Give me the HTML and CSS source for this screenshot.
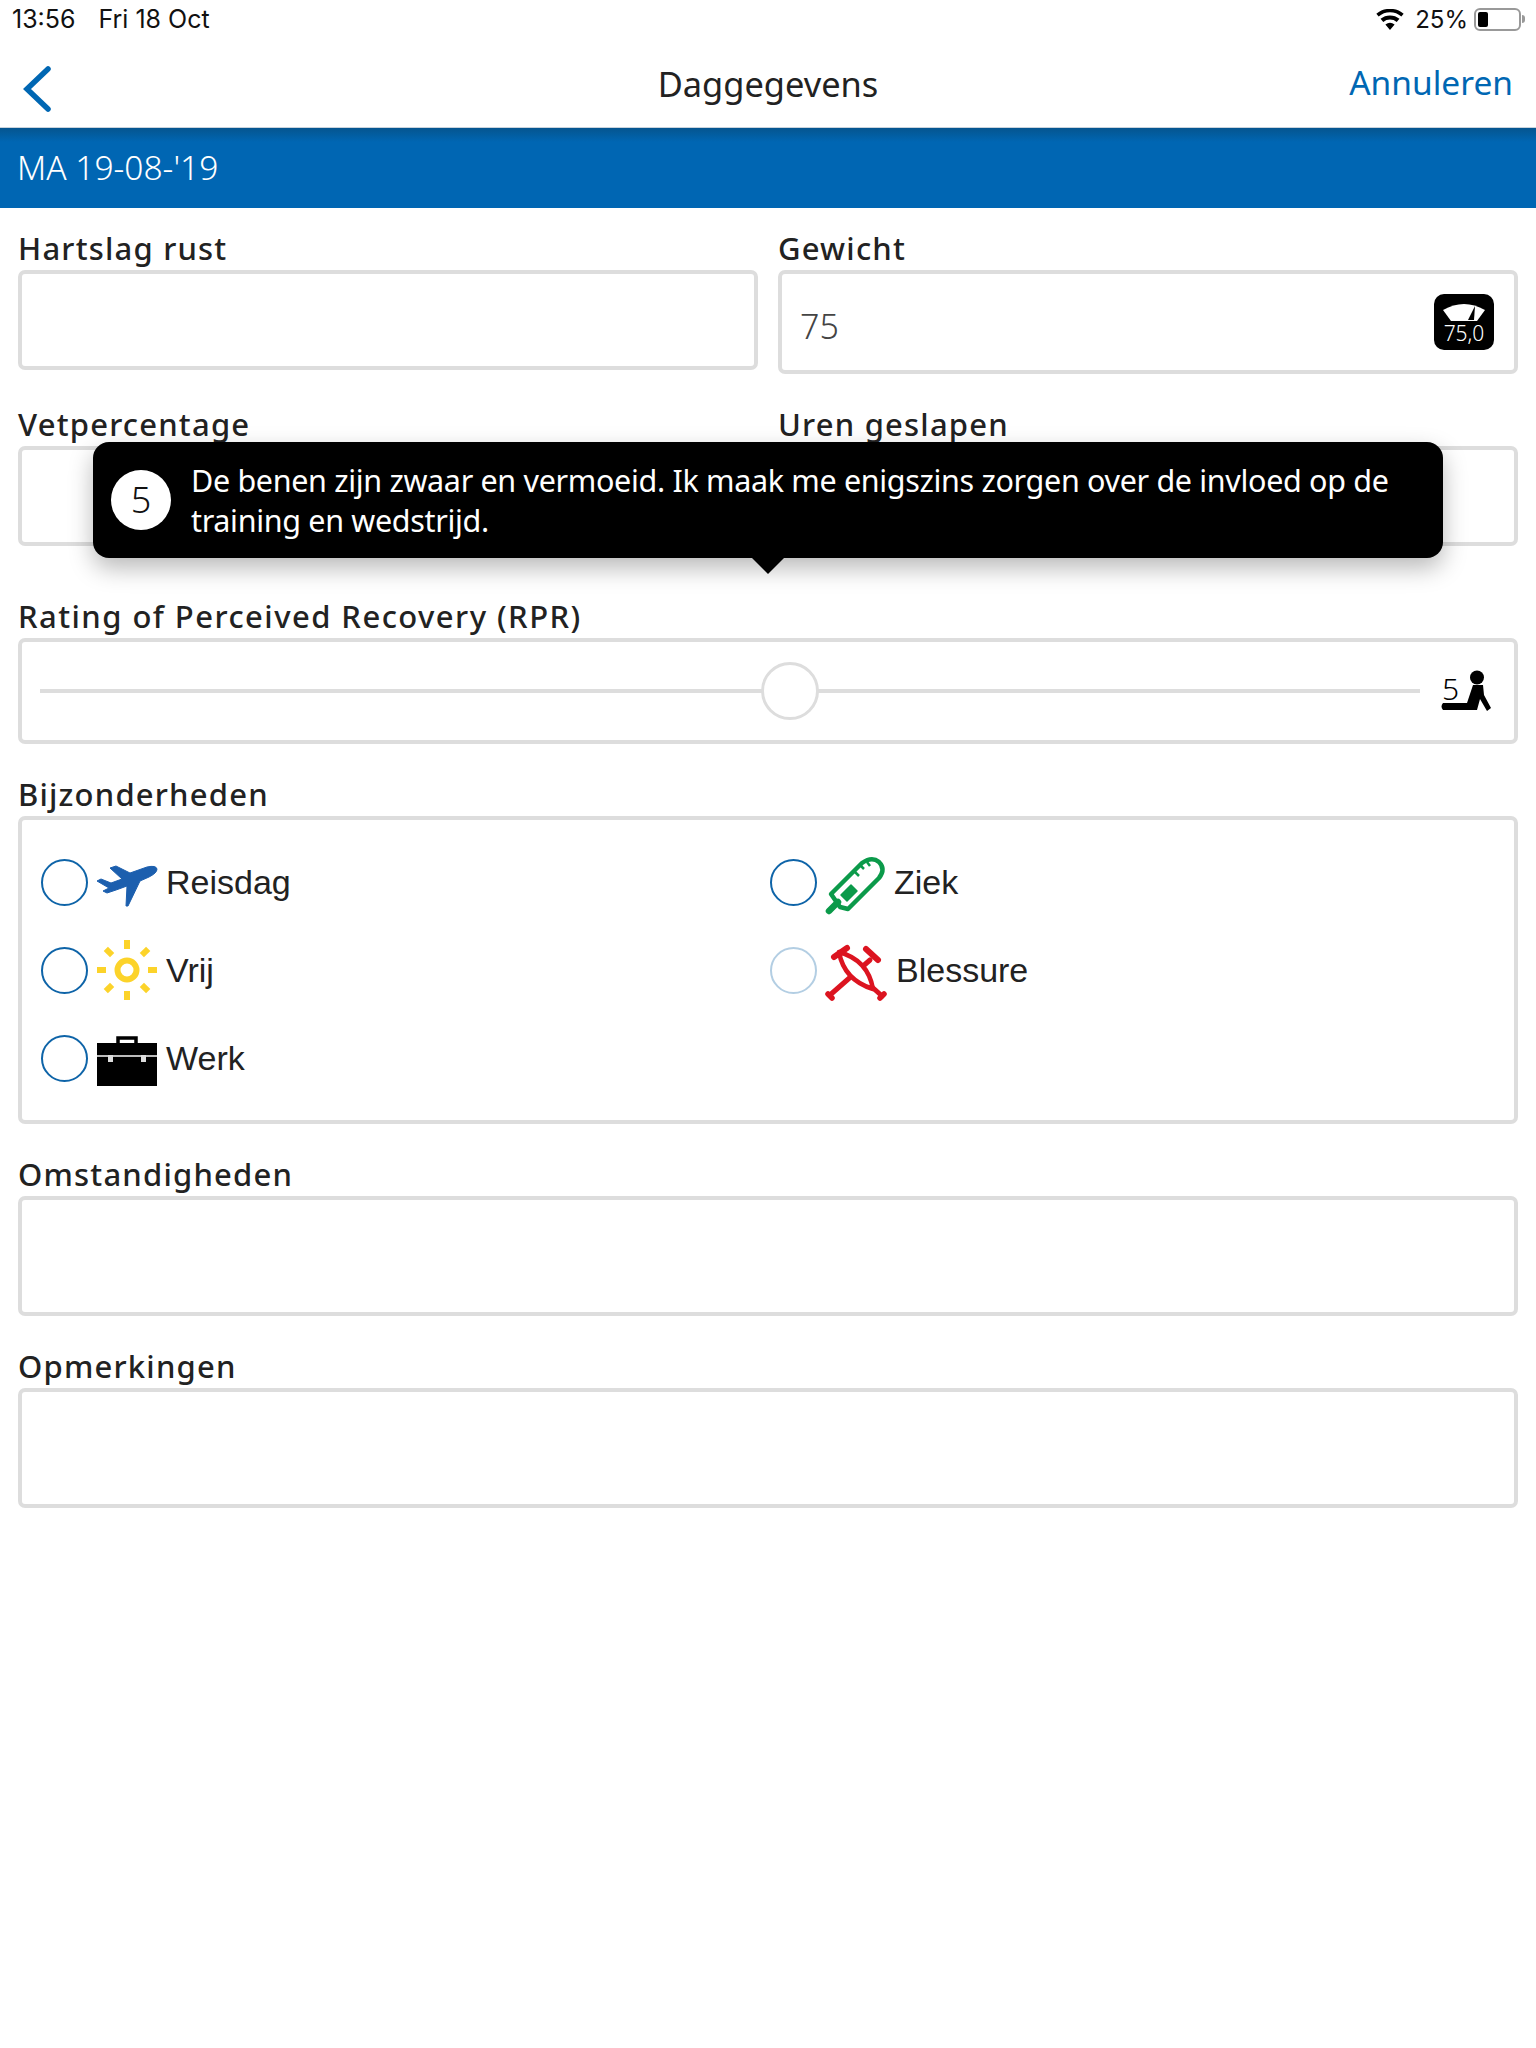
FILE: index.html
```html
<!DOCTYPE html>
<html lang="nl">
<head>
<meta charset="utf-8">
<title>Daggegevens</title>
<link rel="stylesheet" href="styles.css">
</head>
<body>
<div class="page">
  <header class="status">
    <div class="status-left"><span>13:56</span><span>Fri 18 Oct</span></div>
    <div class="status-right">
      <svg class="wifi" viewBox="0 0 26 20"><path d="M13 20 L8.6 14.8 A7 7 0 0 1 17.4 14.8 Z M6.6 12.4 L4 9.4 A14 14 0 0 1 22 9.4 L19.4 12.4 A10 10 0 0 0 6.6 12.4 Z M2.2 7.2 L0 4.6 A20 20 0 0 1 26 4.6 L23.8 7.2 A16.5 16.5 0 0 0 2.2 7.2 Z"/></svg>
      <span class="pct">25%</span>
      <div class="battery"><div class="battery-fill"></div></div>
      <div class="battery-nub"></div>
    </div>
  </header>
  <nav class="nav">
    <svg class="back" viewBox="0 0 30 48"><path d="M26 4 L5 24 L26 44" fill="none" stroke="#0067b3" stroke-width="5.5" stroke-linecap="round" stroke-linejoin="miter"/></svg>
    <div class="nav-title">Daggegevens</div>
    <div class="nav-action">Annuleren</div>
  </nav>
  <div class="band">MA 19-08-'19</div>
  <main class="form">
    <div class="grid">
      <section>
        <label class="label">Hartslag rust</label>
        <div class="box h-100"></div>
      </section>
      <section>
        <label class="label">Gewicht</label>
        <div class="box h-104 weight">
          <span class="value">75</span>
          <div class="scale">
            <svg class="scale-dial" viewBox="0 0 42 20"><path d="M0 8 Q21 -4 42 8 L34 19 L8 19 Z" fill="#fff"/><path d="M25 18 L32 4 L31 18 Z" fill="#000"/></svg>
            <span class="scale-text">75,0</span>
          </div>
        </div>
      </section>
      <section>
        <label class="label">Vetpercentage</label>
        <div class="box h-100"></div>
      </section>
      <section>
        <label class="label">Uren geslapen</label>
        <div class="box h-100"></div>
      </section>
    </div>

    <section class="sec-rpr">
      <label class="label label-wide">Rating of Perceived Recovery (RPR)</label>
      <div class="box h-106 slider">
        <div class="track"><div class="thumb"></div></div>
        <div class="rpr-icon">
          <span class="rpr-num">5</span>
          <svg class="rpr-figure" viewBox="0 0 52 44"><circle cx="37" cy="9.5" r="7"/><path d="M3 35 L27 35 L33 17 L43 17 L44 27 L51 40 L47 43 L40 31 L37 42 L3 42 Q0 38.5 3 35 Z"/></svg>
        </div>
      </div>
    </section>

    <section class="sec">
      <label class="label">Bijzonderheden</label>
      <div class="box checks">
        <div class="check">
          <span class="radio"></span>
          <svg class="ico" viewBox="0 0 60 60"><path fill="#1c5fae" stroke="#1c5fae" stroke-width="1" stroke-linejoin="round" d="M13 16 L19 14 L33 21 L50 15 Q59 13 60 17 Q60 21 52 25 L43 29 L31 54 L29 54 L30 34 L19 38 L10 41 L6 39 L12 36 L0 29 L4 27 L14 31 L25 27 Z"/></svg>
          <span class="check-text">Reisdag</span>
        </div>
        <div class="check">
          <span class="radio"></span>
          <svg class="ico" viewBox="0 0 60 60"><g transform="translate(0 5)" fill="none" stroke="#0b9a4a" stroke-linecap="round" stroke-linejoin="round"><path d="M5 37 L36 6 Q46 -1 53 5 Q60 12 53 21 L22 52 L14 50 Z" stroke-width="4.5"/><path d="M12 45 L3 54" stroke-width="6.5"/><path d="M15 38 L25 28 L31 34 L21 44 Z" fill="#0b9a4a" stroke-width="1.5"/><path d="M29 15 L33 19 M35 9 L38 12 M41 5 L44 9" stroke-width="2.5" stroke-linecap="butt"/></g></svg>
          <span class="check-text text-ziek">Ziek</span>
        </div>
        <div class="check">
          <span class="radio"></span>
          <svg class="ico" viewBox="0 0 60 60"><g fill="#fcd32a"><circle cx="30" cy="30" r="9.5" fill="none" stroke="#fcd32a" stroke-width="6"/><rect x="27" y="0" width="6" height="9"/><rect x="27" y="51" width="6" height="9"/><rect x="0" y="27" width="9" height="6"/><rect x="51" y="27" width="9" height="6"/><rect x="27" y="0" width="6" height="9" transform="rotate(45 30 30)"/><rect x="27" y="0" width="6" height="9" transform="rotate(135 30 30)"/><rect x="27" y="0" width="6" height="9" transform="rotate(225 30 30)"/><rect x="27" y="0" width="6" height="9" transform="rotate(315 30 30)"/></g></svg>
          <span class="check-text text-tight">Vrij</span>
        </div>
        <div class="check">
          <span class="radio radio-faint"></span>
          <svg class="ico" viewBox="0 0 60 60"><g transform="translate(0 6)" fill="none" stroke="#dc1420" stroke-linecap="round" stroke-linejoin="round"><path d="M44 14 L4 49" stroke-width="5"/><path d="M40 3 L52 14" stroke-width="6"/><path d="M13 6 Q42 14 47 43 Q18 34 13 6 Z" fill="#fff" stroke-width="4.5"/><path d="M46 41 L56 50" stroke-width="5"/><path d="M8 11 L21 2" stroke-width="6"/><path d="M2 48 L6 52 M54 52 L58 48" stroke-width="5.5"/></g></svg>
          <span class="check-text text-bless">Blessure</span>
        </div>
        <div class="check">
          <span class="radio"></span>
          <svg class="ico" viewBox="0 0 60 60"><path d="M21 16 V10 H39 V16" fill="none" stroke="#000" stroke-width="3.5"/><rect x="0" y="15" width="60" height="12"/><rect x="0" y="27" width="60" height="2" fill="#bbb"/><rect x="0" y="29" width="60" height="29"/><rect x="11" y="27" width="5" height="7" fill="#ddd"/><rect x="44" y="27" width="5" height="7" fill="#ddd"/></svg>
          <span class="check-text text-tight">Werk</span>
        </div>
      </div>
    </section>

    <section class="sec">
      <label class="label">Omstandigheden</label>
      <div class="box h-120"></div>
    </section>
    <section class="sec">
      <label class="label">Opmerkingen</label>
      <div class="box h-120"></div>
    </section>
  </main>

  <div class="tip">
    <span class="tip-num">5</span>
    <p class="tip-text">De benen zijn zwaar en vermoeid. Ik maak me enigszins zorgen over de invloed op de training en wedstrijd.</p>
    <span class="tip-arrow"></span>
  </div>
</div>
</body>
</html>
```
FILE: styles.css
```css
* { box-sizing: border-box; }
html, body { margin: 0; background: #fff; }
.page {
  position: relative;
  width: 1536px;
  height: 2048px;
  overflow: hidden;
  font-family: "Noto Sans", "Open Sans", sans-serif;
  color: #222;
}
.status {
  height: 38px;
  padding: 0 10px 0 12px;
  display: flex;
  justify-content: space-between;
  align-items: center;
  font-family: Inter, "Liberation Sans", sans-serif;
  font-size: 24px;
  color: #111;
}
.status-left { display: flex; gap: 23px; font-size: 25px; }
.status-right { display: flex; align-items: center; }
.wifi { width: 28px; height: 21px; margin-right: 11px; }
.pct { margin-right: 6px; }
.battery {
  width: 47px;
  height: 23px;
  border: 2px solid #999;
  border-radius: 6px;
  padding: 2px;
}
.battery-fill { width: 10px; height: 100%; background: #000; border-radius: 2px; }
.battery-nub { width: 3px; height: 8px; background: #999; margin-left: 1px; margin-right: 1px; border-radius: 0 3px 3px 0; }
.nav {
  position: relative;
  height: 90px;
  border-bottom: 1px solid #c9d3dc;
  display: flex;
  align-items: center;
  justify-content: space-between;
  padding: 0 23px 0 22px;
}
.back { width: 30px; height: 48px; margin-top: 12px; }
.nav-title {
  position: absolute;
  left: 0;
  right: 0;
  top: 23px;
  text-align: center;
  font-size: 34.4px;
  line-height: 46px;
  color: #222;
}
.nav-action { font-size: 33.5px; line-height: 46px; color: #0067b3; margin-bottom: 2px; }
.band {
  height: 80px;
  padding: 0 17px 2px;
  display: flex;
  align-items: center;
  background: linear-gradient(#05558f, #0066b3 14px);
  color: #fff;
  font-size: 33.5px;
  font-weight: 300;
}
.form { padding: 20px 18px 0; }
.grid {
  display: grid;
  grid-template-columns: 740px 740px;
  column-gap: 20px;
  row-gap: 30px;
  align-items: start;
}
.label {
  display: block;
  height: 42px;
  font-size: 31px;
  line-height: 40px;
  font-weight: 500;
  letter-spacing: 1.2px;
  color: #222;
}
.label-wide { letter-spacing: 1.45px; }
.box { border: 4px solid #ddd; border-radius: 7px; background: #fff; }
.h-100 { height: 100px; }
.h-104 { height: 104px; }
.h-106 { height: 106px; }
.h-120 { height: 120px; }
.weight {
  display: flex;
  align-items: center;
  justify-content: space-between;
  padding: 0 20px 0 18px;
}
.value { font-size: 34px; font-weight: 300; color: #444; padding-top: 8px; }
.scale {
  width: 60px;
  height: 56px;
  background: #000;
  border-radius: 10px;
  display: flex;
  flex-direction: column;
  align-items: center;
  padding-top: 8px;
}
.scale-dial { width: 42px; height: 20px; flex: none; }
.scale-text { color: #fff; font-size: 21px; line-height: 22px; font-weight: 300; }
.sec-rpr { margin-top: 50px; }
.sec { margin-top: 30px; }
.slider {
  display: flex;
  align-items: center;
  padding: 0 0 0 18px;
}
.track {
  position: relative;
  width: 1380px;
  height: 4px;
  background: #ddd;
}
.thumb {
  position: absolute;
  left: 721px;
  top: -27px;
  width: 58px;
  height: 58px;
  border: 3px solid #ddd;
  border-radius: 50%;
  background: #fff;
}
.rpr-icon { position: relative; margin-left: 20px; width: 52px; height: 46px; }
.rpr-num { position: absolute; left: 2px; top: 2px; font-size: 30px; line-height: 38px; font-weight: 300; color: #000; }
.rpr-figure { position: absolute; left: 0; top: 0; width: 52px; height: 44px; }
.checks {
  height: 308px;
  padding: 32px 0 0 19px;
  display: grid;
  grid-template-columns: 729px 1fr;
  grid-auto-rows: 88px;
  align-content: start;
}
.check { display: flex; align-items: center; height: 60px; }
.radio {
  width: 47px;
  height: 47px;
  border: 2.5px solid #0e64a8;
  border-radius: 50%;
  margin-right: 8px;
  flex: none;
}
.radio-faint { border-color: #b3cee3; }
.ico { width: 60px; height: 60px; flex: none; overflow: visible; margin-left: 1px; }
.check-text {
  font-family: "Liberation Sans", Arial, sans-serif;
  font-size: 34px;
  margin-left: 9px;
  color: #222;
}
.text-tight { margin-left: 9px; }
.text-ziek { margin-left: 8px; }
.text-bless { margin-left: 10px; }
.tip {
  position: absolute;
  left: 93px;
  top: 442px;
  width: 1350px;
  height: 116px;
  background: #000;
  color: #fff;
  border-radius: 16px;
  box-shadow: 0 10px 24px rgba(0, 0, 0, 0.28);
  display: flex;
  align-items: center;
  padding: 0 30px 0 18px;
}
.tip-num {
  width: 60px;
  height: 60px;
  border-radius: 50%;
  background: #fff;
  color: #111;
  font-size: 36px;
  font-weight: 300;
  padding-bottom: 2px;
  display: flex;
  align-items: center;
  justify-content: center;
  flex: none;
  margin-right: 20px;
}
.tip-text { margin: 0; font-size: 30.5px; line-height: 40px; font-weight: 400; letter-spacing: -0.33px; }
.tip-arrow {
  position: absolute;
  left: 659px;
  bottom: -16px;
  width: 0;
  height: 0;
  border-left: 16px solid transparent;
  border-right: 16px solid transparent;
  border-top: 16px solid #000;
}
```
